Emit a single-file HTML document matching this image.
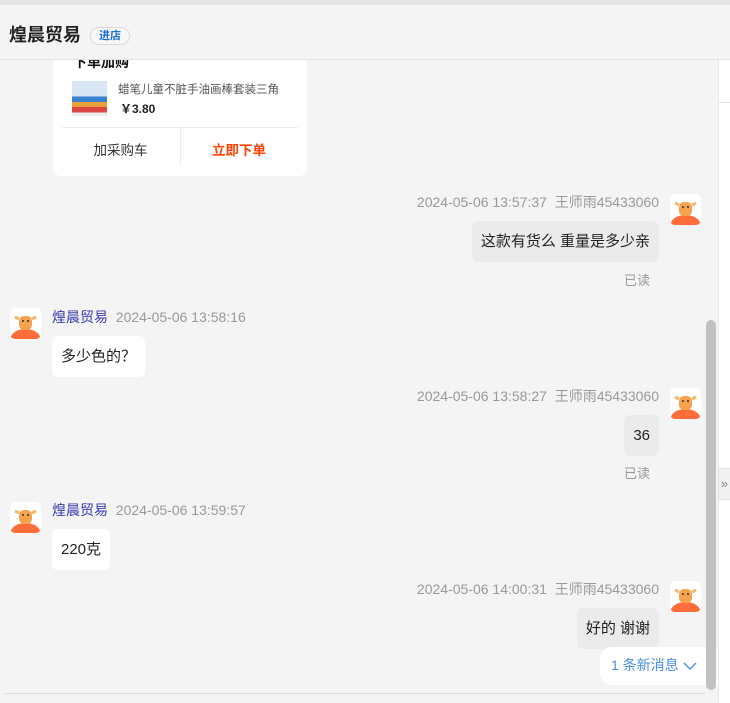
<!DOCTYPE html>
<html><head><meta charset="utf-8"><style>
*{margin:0;padding:0;box-sizing:border-box}
body{width:730px;height:703px;overflow:hidden;background:#f4f4f4;font-family:"Liberation Sans","Noto Sans CJK SC",sans-serif;position:relative;color:#333}
.abs{position:absolute}
.top{left:0;top:0;width:730px;height:5px;background:#e4e4e4}
.hdr{left:0;top:5px;width:730px;height:55px;background:#f4f4f4;border-bottom:1px solid #e2e2e2}
.hdr .t{position:absolute;left:9px;top:16px;font-size:18px;font-weight:bold;color:#222}
.hdr .b{position:absolute;left:90px;top:22px;width:40px;height:18px;border:1px solid #d8d8d8;border-radius:9px;font-size:11px;color:#1a6fd6;text-align:center;line-height:16px;background:#f8f8f8;font-weight:bold}
.card{left:53px;top:60px;width:254px;height:116px;background:#fff;border-radius:0 0 8px 8px;overflow:hidden}
.rp{left:718px;top:60px;width:12px;height:643px;background:#fff;border-left:1px solid #e8e8e8}
.sb{left:706px;top:320px;width:10px;height:370px;background:#c1c1c1;border-radius:5px}
.tab{left:718px;top:468px;width:12px;height:32px;background:#f0f0f0;border:1px solid #e0e0e0;border-right:none;font-size:13px;color:#888;line-height:30px;text-align:center}
.meta{font-size:14px;color:#999;white-space:nowrap;line-height:16px}
.meta .n{color:#3a3ab0}
.bub{font-size:15px;color:#222;padding:0 9px;height:41px;line-height:41px;border-radius:6px;white-space:nowrap}
.me{background:#ebebeb}
.ot{background:#fff}
.read{font-size:13px;color:#999}
.av{width:31px;height:31px;border-radius:5px;background:#fff;overflow:hidden}
.bline{left:5px;top:693px;width:700px;height:1px;background:#ddd}
.newm{left:600px;top:647px;width:118px;height:38px;background:#fff;border-radius:12px 0 0 12px;font-size:14px;color:#4a90e2;line-height:36px;padding-left:11px}
</style></head><body>
<div class="abs top"></div>
<div class="abs hdr"><div class="t">煌晨贸易</div><div class="b">进店</div></div>
<div class="abs card">
 <div style="position:absolute;left:20px;top:-8px;font-size:14px;font-weight:bold;color:#111">下单加购</div>
 <div style="position:absolute;left:19px;top:21px;width:35px;height:35px;background:linear-gradient(#d9e6f3 0 45%,#3a7fd0 45% 60%,#e9a03a 60% 75%,#d44 75% 90%,#eee 90%)"></div>
 <div style="position:absolute;left:65px;top:21px;font-size:11.5px;color:#555">蜡笔儿童不脏手油画棒套装三角</div>
 <div style="position:absolute;left:67px;top:40px;font-size:12px;font-weight:bold;color:#222">￥3.80</div>
 <div style="position:absolute;left:9px;top:67px;width:236px;height:1px;background:#ececec"></div>
 <div style="position:absolute;left:127px;top:68px;width:1px;height:38px;background:#ececec"></div>
 <div style="position:absolute;left:0;top:79px;width:135px;text-align:center;font-size:13.5px;color:#333">加采购车</div>
 <div style="position:absolute;left:125px;top:79px;width:122px;text-align:center;font-size:13.5px;color:#ff4000;font-weight:bold">立即下单</div>
</div>

<div class="abs meta" style="right:71px;top:194px">2024-05-06 13:57:37 &nbsp;王师雨45433060</div>
<div class="abs av" style="left:670px;top:194px"><svg width="31" height="31"><ellipse cx="15.5" cy="31" rx="15" ry="10" fill="#ff6e3a"/><path d="M5 9l4 2 M26 9l-4 2" stroke="#f5b76a" stroke-width="3"/><rect x="9" y="8" width="13" height="14" rx="5" fill="#f7a24e"/><circle cx="13" cy="13" r="1" fill="#333"/><circle cx="18" cy="13" r="1" fill="#333"/></svg></div>
<div class="abs bub me" style="right:71px;top:221px">这款有货么 重量是多少亲</div>
<div class="abs read" style="left:624px;top:270px">已读</div>

<div class="abs av" style="left:10px;top:308px"><svg width="31" height="31"><ellipse cx="15.5" cy="31" rx="15" ry="10" fill="#ff6e3a"/><path d="M5 9l4 2 M26 9l-4 2" stroke="#f5b76a" stroke-width="3"/><rect x="9" y="8" width="13" height="14" rx="5" fill="#f7a24e"/><circle cx="13" cy="13" r="1" fill="#333"/><circle cx="18" cy="13" r="1" fill="#333"/></svg></div>
<div class="abs meta" style="left:52px;top:309px"><span class="n">煌晨贸易</span> &nbsp;2024-05-06 13:58:16</div>
<div class="abs bub ot" style="left:52px;top:336px">多少色的？</div>

<div class="abs meta" style="right:71px;top:388px">2024-05-06 13:58:27 &nbsp;王师雨45433060</div>
<div class="abs av" style="left:670px;top:388px"><svg width="31" height="31"><ellipse cx="15.5" cy="31" rx="15" ry="10" fill="#ff6e3a"/><path d="M5 9l4 2 M26 9l-4 2" stroke="#f5b76a" stroke-width="3"/><rect x="9" y="8" width="13" height="14" rx="5" fill="#f7a24e"/><circle cx="13" cy="13" r="1" fill="#333"/><circle cx="18" cy="13" r="1" fill="#333"/></svg></div>
<div class="abs bub me" style="right:71px;top:415px">36</div>
<div class="abs read" style="left:624px;top:463px">已读</div>

<div class="abs av" style="left:10px;top:502px"><svg width="31" height="31"><ellipse cx="15.5" cy="31" rx="15" ry="10" fill="#ff6e3a"/><path d="M5 9l4 2 M26 9l-4 2" stroke="#f5b76a" stroke-width="3"/><rect x="9" y="8" width="13" height="14" rx="5" fill="#f7a24e"/><circle cx="13" cy="13" r="1" fill="#333"/><circle cx="18" cy="13" r="1" fill="#333"/></svg></div>
<div class="abs meta" style="left:52px;top:502px"><span class="n">煌晨贸易</span> &nbsp;2024-05-06 13:59:57</div>
<div class="abs bub ot" style="left:52px;top:529px">220克</div>

<div class="abs meta" style="right:71px;top:581px">2024-05-06 14:00:31 &nbsp;王师雨45433060</div>
<div class="abs av" style="left:670px;top:581px"><svg width="31" height="31"><ellipse cx="15.5" cy="31" rx="15" ry="10" fill="#ff6e3a"/><path d="M5 9l4 2 M26 9l-4 2" stroke="#f5b76a" stroke-width="3"/><rect x="9" y="8" width="13" height="14" rx="5" fill="#f7a24e"/><circle cx="13" cy="13" r="1" fill="#333"/><circle cx="18" cy="13" r="1" fill="#333"/></svg></div>
<div class="abs bub me" style="right:71px;top:608px">好的 谢谢</div>

<div class="abs bline"></div>
<div class="abs rp"><div style="position:absolute;left:0;top:42px;width:12px;height:1px;background:#e4e4e4"></div></div>
<div class="abs newm">1 条新消息 <svg width="14" height="10" style="vertical-align:middle"><path d="M1 2l6 6 6-6" stroke="#4a90e2" fill="none" stroke-width="1.4"/></svg></div>
<div class="abs sb"></div>
<div class="abs tab">»</div>
</body></html>
